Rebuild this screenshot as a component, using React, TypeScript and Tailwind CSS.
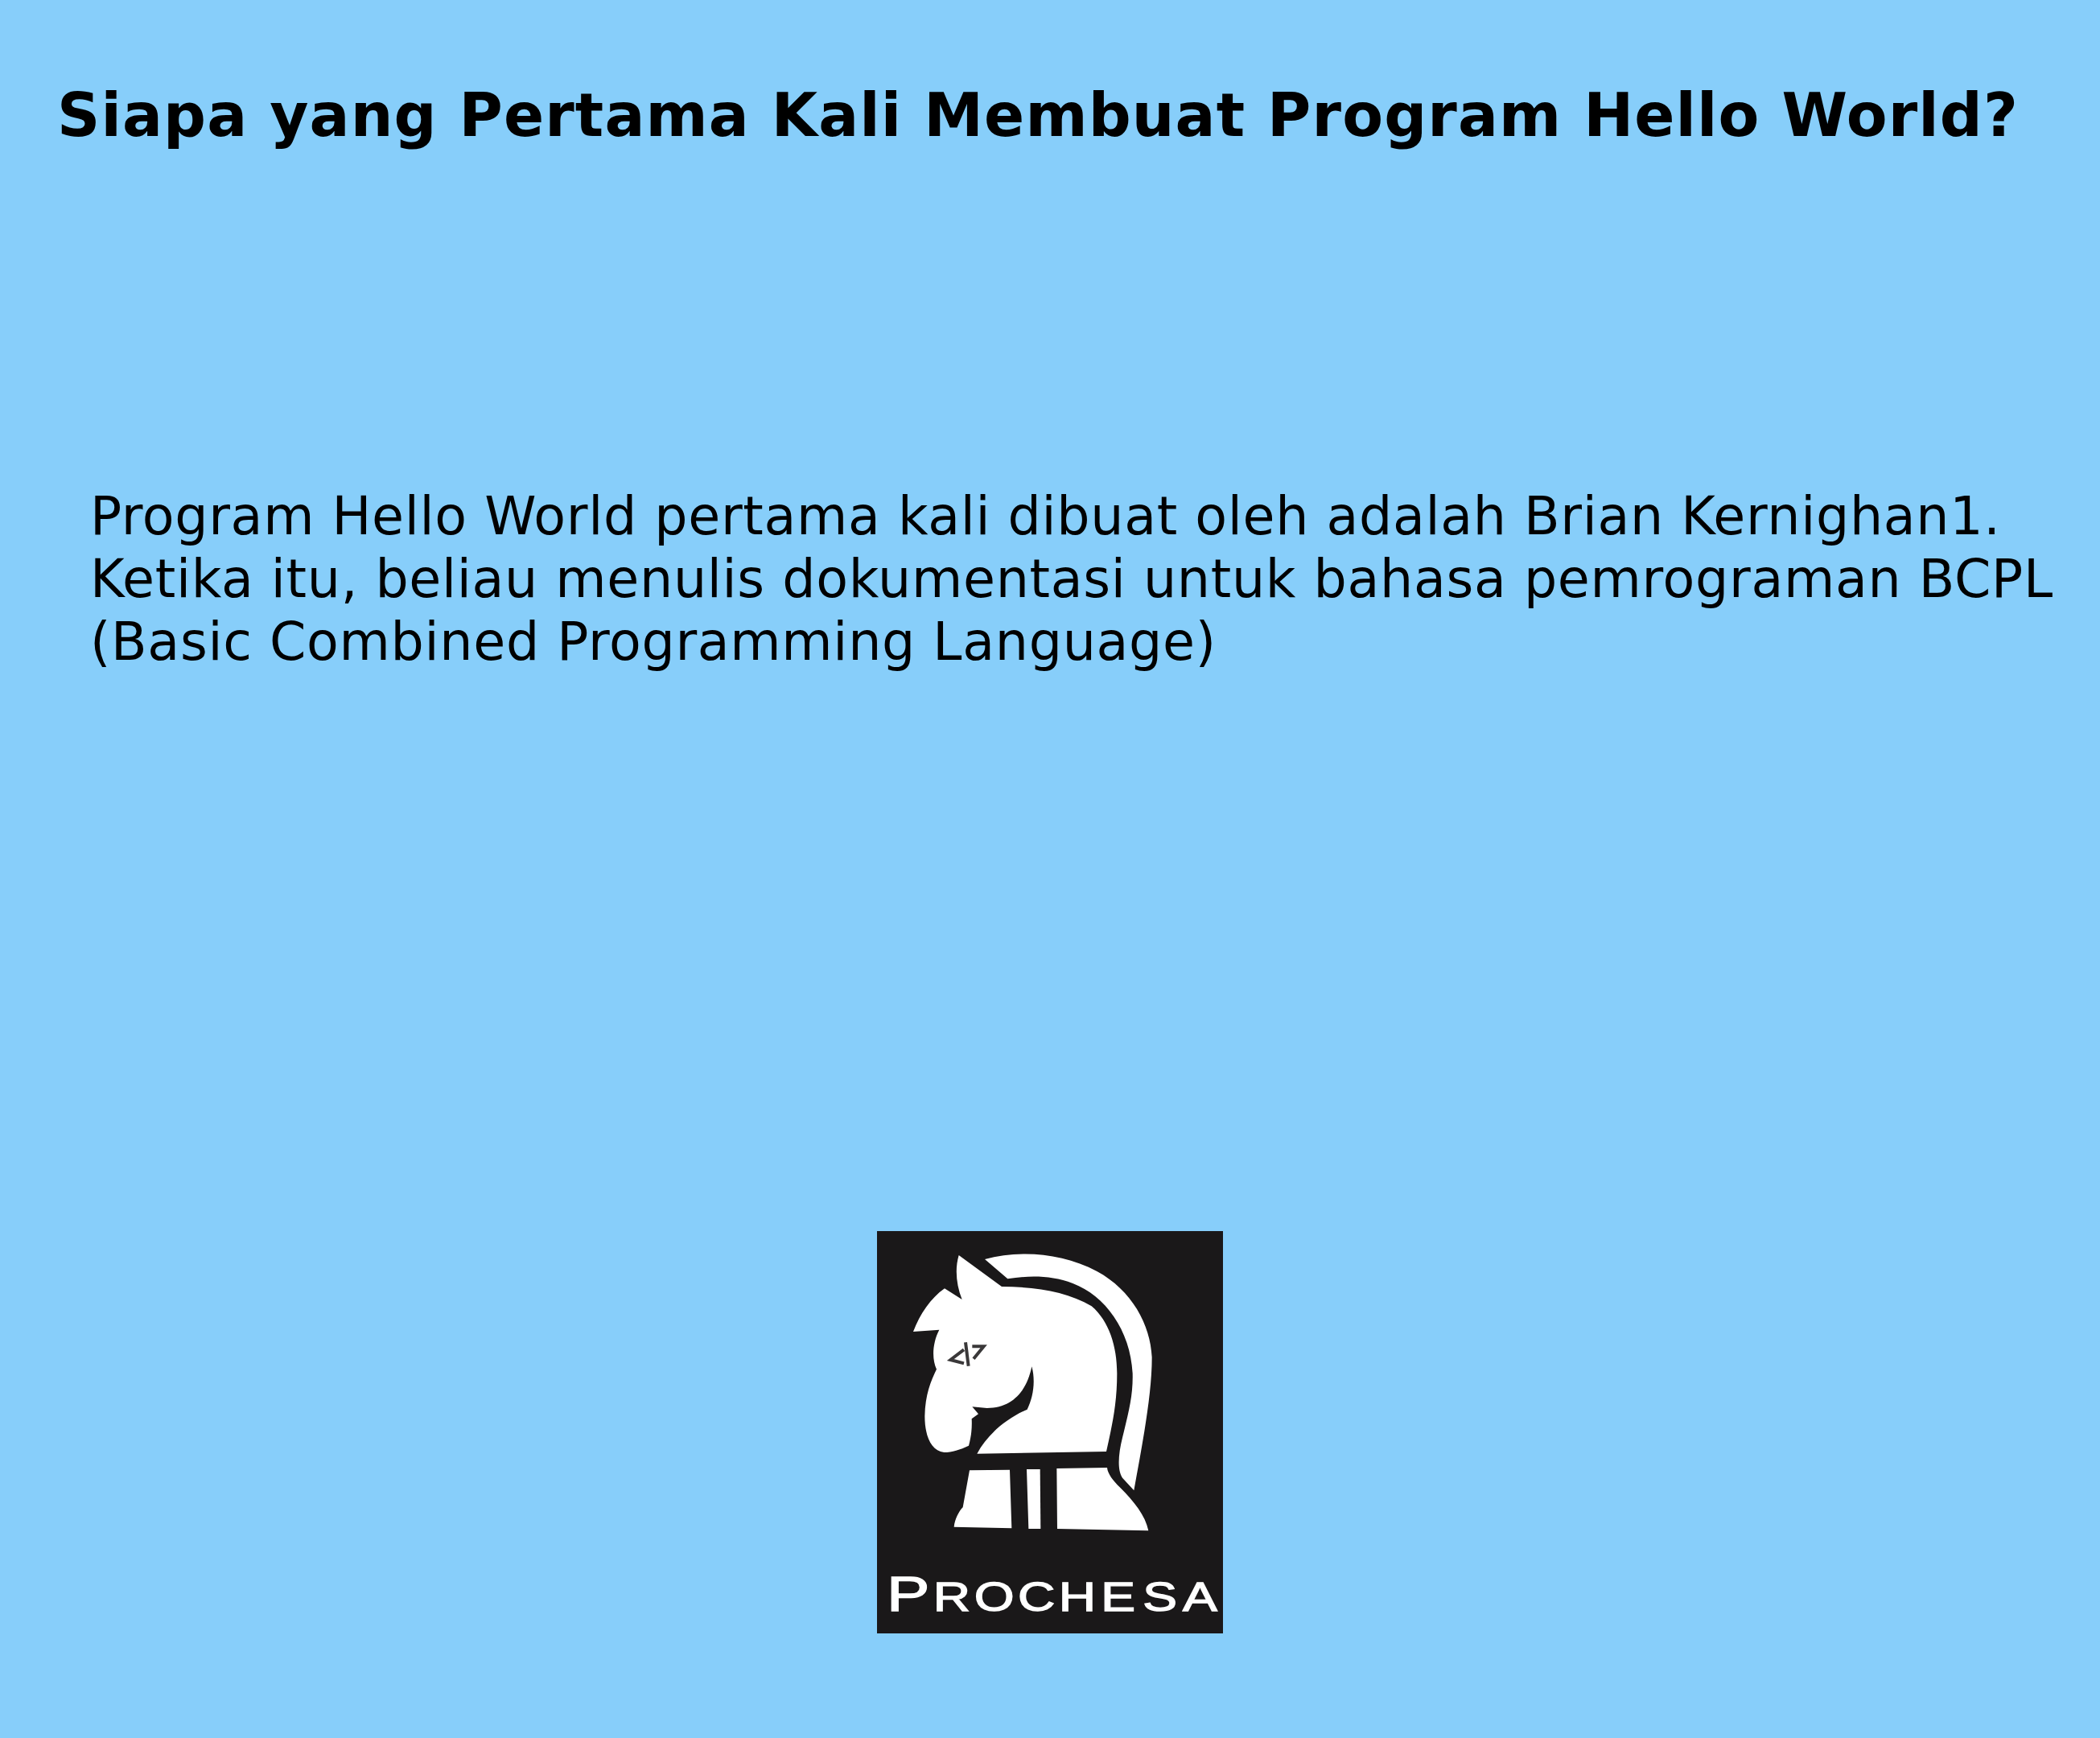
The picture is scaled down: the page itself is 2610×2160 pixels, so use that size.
function ProchesaLogo() {
  return (
    <svg viewBox="30 30 1290 1500" className="block h-[500px] w-[430px]">
      <rect x="30" y="30" width="1290" height="1500" fill="#1a1819" />
      {/* head */}
      <path
        fill="#fff"
        d="M335 120 L495 237 C620 238 740 255 830 310 C895 365 925 460 925 560 C925 680 905 760 885 852 L403 860 C440 790 510 730 590 695 C612 650 622 590 607 535 C590 620 540 690 440 690 L385 685 L408 712 L383 730 C385 770 380 800 372 830 C340 845 310 855 280 855 C230 850 208 790 208 720 C210 640 230 590 252 545 C235 510 235 450 262 398 L165 405 C190 340 230 280 282 244 L347 285 C325 230 320 170 335 120 Z"
      />
      {/* mane */}
      <path
        fill="#fff"
        d="M432 135 C560 100 720 110 850 180 C980 250 1050 380 1055 500 C1055 640 1020 820 988 997 L945 950 C925 920 930 860 945 800 C970 700 985 640 983 560 C975 400 880 270 760 225 C680 195 600 195 517 208 Z"
      />
      {/* base */}
      <path fill="#fff" d="M375 922 L525 920 L532 1138 L317 1133 C320 1105 335 1075 350 1060 Z" />
      <path fill="#fff" d="M588 918 L638 918 L640 1140 L595 1140 Z" />
      <path
        fill="#fff"
        d="M700 915 L888 912 C890 935 910 960 935 985 C990 1040 1030 1090 1042 1147 L702 1140 Z"
      />
      {/* code mark on the eye */}
      <g fill="none" stroke="#3a3839" strokeWidth="12">
        <path d="M354 472 L304 510 L354 523" />
        <path d="M360 445 L371 533" />
        <path d="M385 460 L428 460 L390 506" />
      </g>
      <g transform="scale(1.3 1)">
        <text
          y="1447"
          fill="#fff"
          stroke="#fff"
          strokeWidth="4"
          fontFamily="'Liberation Sans', sans-serif"
        >
          <tspan x="51" fontSize="185">P</tspan>
          <tspan x="184 302 427 544 665 785 900" fontSize="148">ROCHESA</tspan>
        </text>
      </g>
    </svg>
  );
}

export default function App() {
  return (
    <div className="flex h-[2160px] w-[2610px] flex-col bg-[#87cefa] font-['DejaVu_Sans',sans-serif] text-black">
      <h1 className="mt-[93px] pl-[71px] text-[74px] leading-[100px] font-bold tracking-[1.15px] whitespace-nowrap">
        Siapa yang Pertama Kali Membuat Program Hello World?
      </h1>
      <p className="mt-[410px] pl-[112px] text-[65px] leading-[78px] tracking-[0.7px] whitespace-nowrap">
        Program Hello World pertama kali dibuat oleh adalah Brian Kernighan1.
        <br />
        Ketika itu, beliau menulis dokumentasi untuk bahasa pemrograman BCPL
        <br />
        (Basic Combined Programming Language)
      </p>
      <div className="mt-auto mb-[130px] self-center">
        <ProchesaLogo />
      </div>
    </div>
  );
}
